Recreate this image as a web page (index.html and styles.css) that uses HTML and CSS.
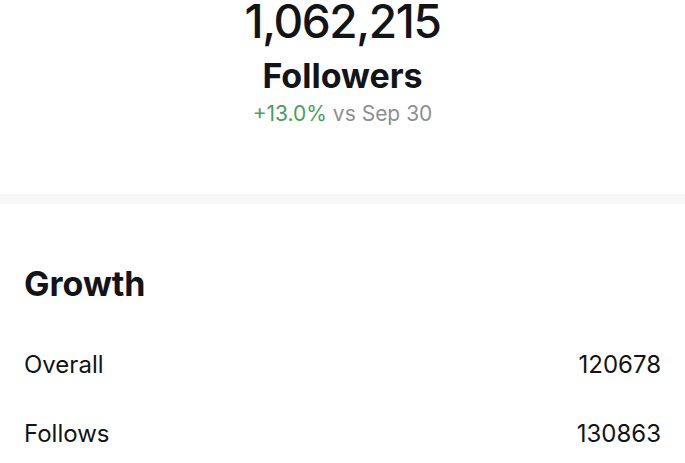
FILE: index.html
```html
<!DOCTYPE html>
<html>
<head>
<meta charset="utf-8">
<link rel="stylesheet" href="styles.css">
</head>
<body>
<section class="summary">
  <div class="total">1,062,215</div>
  <div class="label">Followers</div>
  <div class="change"><span class="up">+13.0%</span> vs Sep 30</div>
</section>
<div class="divider"></div>
<section class="growth">
  <h2 class="title">Growth</h2>
  <div class="row"><span>Overall</span><span>120678</span></div>
  <div class="row"><span>Follows</span><span>130863</span></div>
</section>
</body>
</html>
```
FILE: styles.css
```css
html, body {
  margin: 0;
  padding: 0;
  background: #ffffff;
  font-family: Inter, "Liberation Sans", sans-serif;
  color: #121417;
  overflow: hidden;
}
.summary {
  display: flex;
  flex-direction: column;
  align-items: center;
  height: 194px;
}
.total {
  font-size: 46px;
  font-weight: 500;
  line-height: 42px;
  letter-spacing: -1.4px;
}
.label {
  font-size: 34px;
  font-weight: 700;
  line-height: 40px;
  margin-top: 14px;
}
.change {
  font-size: 21px;
  line-height: 26px;
  margin-top: 5px;
  color: #8c8f94;
}
.up {
  color: #4a9d5d;
}
.divider {
  height: 10px;
  background: #f7f7f7;
}
.growth {
  padding: 60px 24px 0 24px;
}
.title {
  margin: 0;
  font-size: 34px;
  font-weight: 700;
  line-height: 40px;
}
.row {
  display: flex;
  justify-content: space-between;
  font-size: 24px;
  line-height: 28px;
  margin-top: 47px;
}
.row + .row {
  margin-top: 41px;
}
```
